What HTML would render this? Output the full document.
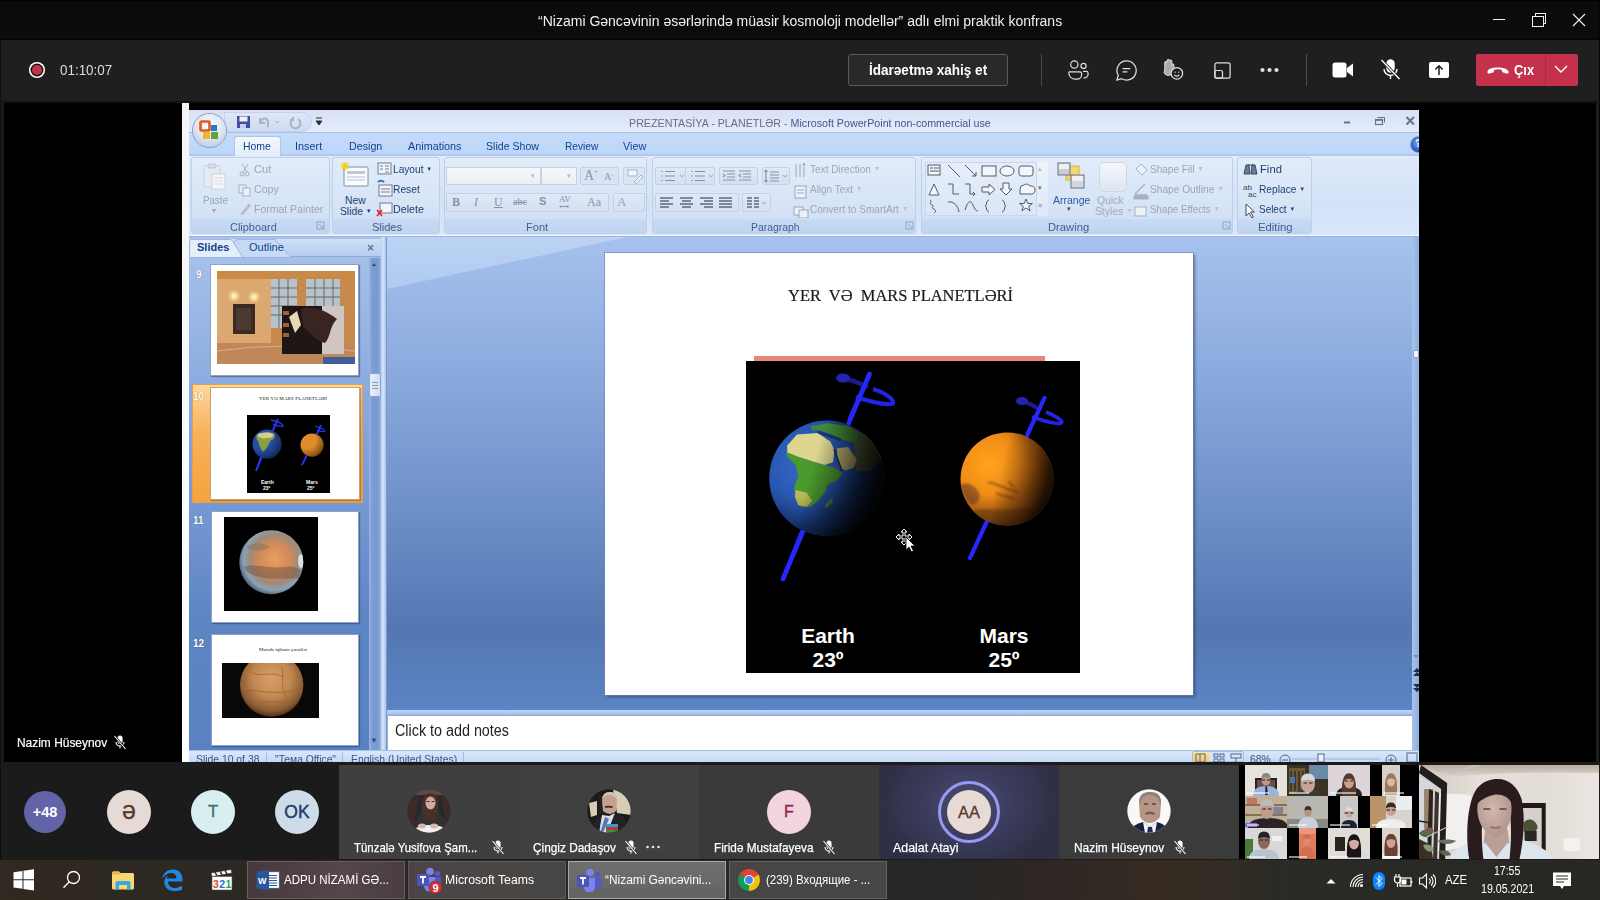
<!DOCTYPE html>
<html><head><meta charset="utf-8">
<style>
*{margin:0;padding:0;box-sizing:border-box}
html,body{width:1600px;height:900px;overflow:hidden;background:#1b1b1b;font-family:"Liberation Sans",sans-serif}
.a{position:absolute}
.t{position:absolute;white-space:nowrap;line-height:1}
</style></head><body>
<div class="a" style="left:0;top:0;width:1600px;height:900px;overflow:hidden">

<!-- ===== Teams title bar ===== -->
<div class="a" style="left:0;top:0;width:1600px;height:40px;background:#0b0b0b"></div>
<div class="a" style="left:0;top:0;width:1600px;height:1px;background:#030303"></div>
<div class="a" style="left:0;top:39px;width:1600px;height:1px;background:#040404"></div>
<div class="t" id="title" style="left:538.4px;top:14px;font-size:14px;color:#f0f0f0;transform:scaleX(1.001);transform-origin:0 0">“Nizami Gəncəvinin əsərlərində müasir kosmoloji modellər” adlı elmi praktik konfrans</div>

<!-- ===== Teams control bar ===== -->
<div class="a" style="left:0;top:40px;width:1600px;height:61px;background:#1f1f1f"></div>


<!-- title bar window controls -->
<svg class="a" style="left:1480px;top:0" width="120" height="40" viewBox="0 0 120 40" fill="none" stroke="#f2f2f2" stroke-width="1" shape-rendering="crispEdges">
 <path d="M13 19.5 H25"/>
 <rect x="52.5" y="16.5" width="10.5" height="10"/>
 <path d="M55.5 16 V13.5 H65.5 V23.5 H63"/>
 <path d="M93 14 L105 26 M105 14 L93 26" shape-rendering="auto" stroke-width="1.1"/>
</svg>
<!-- record + timer -->
<svg class="a" style="left:27px;top:61px" width="20" height="20" viewBox="0 0 20 20">
 <circle cx="10" cy="9" r="8.1" fill="#fff"/><circle cx="10" cy="9" r="6.5" fill="#121212"/><circle cx="10" cy="9" r="5.1" fill="#c4314b"/>
</svg>
<div class="t" style="left:60.4px;top:63px;font-size:14px;color:#dcdcdc;transform:scaleX(0.958);transform-origin:0 0">01:10:07</div>
<!-- request control button -->
<div class="a" style="left:848px;top:54px;width:160px;height:32px;border:1px solid #5a5a5a;border-radius:3px;background:#292929"></div>
<div class="t" style="left:869.4px;top:63px;font-size:14px;font-weight:bold;color:#fff;transform:scaleX(0.967);transform-origin:0 0">İdarəetmə xahiş et</div>
<div class="a" style="left:1041px;top:54px;width:1px;height:32px;background:#4a4a4a"></div>
<div class="a" style="left:1306px;top:54px;width:1px;height:32px;background:#4a4a4a"></div>
<!-- people icon -->
<svg class="a" style="left:1065px;top:59px" width="26" height="22" viewBox="0 0 28 24" fill="none" stroke="#e0e0e0" stroke-width="1.3">
 <circle cx="10" cy="6" r="4"/><circle cx="20" cy="7.5" r="2.8"/>
 <path d="M4 14 h12 a2 2 0 0 1 2 2 v1 a5 5 0 0 1 -5 5 h-2 a7 7 0 0 1 -7 -6 v-1 a1 1 0 0 1 1 -1z"/>
 <path d="M19.5 13.5 h3.5 a2 2 0 0 1 2 2 v1 a4 4 0 0 1 -5 4"/>
</svg>
<!-- chat icon -->
<svg class="a" style="left:1115px;top:59px" width="23" height="23" viewBox="0 0 24 24" fill="none" stroke="#e0e0e0" stroke-width="1.3">
 <path d="M12 2 a10 10 0 1 1 -5 18.6 L2 22 L3.4 17 A10 10 0 0 1 12 2z"/>
 <path d="M8 10 H16 M8 13.5 H13"/>
</svg>
<!-- react icon -->
<svg class="a" style="left:1160px;top:57px" width="25" height="25" viewBox="0 0 26 26" fill="none" stroke="#e0e0e0" stroke-width="1.3">
 <path d="M5 13 V6 a1.2 1.2 0 0 1 2.4 0 V4 a1.2 1.2 0 0 1 2.4 0 V4.5 a1.2 1.2 0 0 1 2.4 0 V8 a1.2 1.2 0 0 1 2.2 0.5 V13 a6 6 0 0 1 -6 6 a5 5 0 0 1 -4 -3z" fill="#aaa" stroke="#d0d0d0"/>
 <circle cx="17.5" cy="17" r="6" fill="#1f1f1f"/>
 <circle cx="15.7" cy="15.8" r="0.7" fill="#e0e0e0" stroke="none"/><circle cx="19.3" cy="15.8" r="0.7" fill="#e0e0e0" stroke="none"/>
 <path d="M15 18.5 a2.8 2.8 0 0 0 5 0"/>
</svg>
<!-- share tray icon -->
<svg class="a" style="left:1213px;top:61px" width="19" height="19" viewBox="0 0 20 20" fill="none" stroke="#e0e0e0" stroke-width="1.3">
 <rect x="2" y="2" width="16" height="16" rx="2"/>
 <rect x="2" y="10" width="8" height="8" rx="1.5"/>
</svg>
<!-- more dots -->
<svg class="a" style="left:1258px;top:62px" width="24" height="16" viewBox="0 0 24 16" fill="#e0e0e0">
 <circle cx="4.5" cy="8" r="2.1"/><circle cx="11.5" cy="8" r="2.1"/><circle cx="18.5" cy="8" r="2.1"/>
</svg>
<!-- camera -->
<svg class="a" style="left:1330px;top:58px" width="26" height="24" viewBox="0 0 26 24" fill="#fff">
 <rect x="2.5" y="4.5" width="14" height="15" rx="2.5"/>
 <path d="M17 10 L23 5.5 V18.5 L17 14z"/>
</svg>
<!-- mic off -->
<svg class="a" style="left:1379px;top:58px" width="24" height="24" viewBox="0 0 24 24" fill="none" stroke="#fff" stroke-width="1.4">
 <rect x="8" y="2" width="7" height="12" rx="3.5" fill="#fff"/>
 <path d="M5 11 a6.5 6.5 0 0 0 13 0 M11.5 17.5 V21"/>
 <path d="M2.5 2 L20.5 21" stroke="#1f1f1f" stroke-width="3"/>
 <path d="M2.5 2 L20.5 21"/>
</svg>
<!-- share -->
<svg class="a" style="left:1427px;top:58px" width="24" height="24" viewBox="0 0 24 24">
 <rect x="2" y="4" width="20" height="16" rx="2" fill="#fff"/>
 <path d="M12 17 V8 M8.3 11.5 L12 7.8 L15.7 11.5" fill="none" stroke="#1f1f1f" stroke-width="1.5"/>
</svg>
<!-- leave button -->
<div class="a" style="left:1476px;top:54px;width:102px;height:32px;background:#c4314b;border-radius:2px"></div>
<div class="a" style="left:1545px;top:54px;width:1px;height:32px;background:#a9283f"></div>
<svg class="a" style="left:1486px;top:62px" width="24" height="16" viewBox="0 0 24 16">
 <path d="M1.5 9.5 C2 4 21 4 22.5 9.5 C22.8 11 22 12 20.8 11.6 L17 10.5 C16 10.2 16 9 16 8 C13 7 11 7 8 8 C8 9 8 10.2 7 10.5 L3.2 11.6 C2 12 1.2 11 1.5 9.5z" fill="#fff"/>
</svg>
<div class="t" style="left:1514.4px;top:63px;font-size:14px;font-weight:bold;color:#fff;transform:scaleX(0.927);transform-origin:0 0">Çıx</div>
<svg class="a" style="left:1553px;top:63px" width="16" height="12" viewBox="0 0 16 12">
 <path d="M2 3 L8 9 L14 3" fill="none" stroke="#fff" stroke-width="1.4"/>
</svg>
<div class="a" style="left:1596px;top:101px;width:3px;height:661px;background:#1e1e1e"></div>
<div class="a" style="left:1599px;top:0;width:1px;height:860px;background:#050505"></div>
<div class="a" style="left:0;top:40px;width:1px;height:820px;background:#101010"></div>

<!-- ===== Share area ===== -->
<div class="a" style="left:0;top:101px;width:1600px;height:2px;background:#141414"></div>
<div class="a" style="left:4px;top:103px;width:1592px;height:659px;background:#000"></div>


<!-- PowerPoint window -->
<div class="a" style="left:182px;top:103px;width:7px;height:659px;background:linear-gradient(#f4f4f8,#fff)"></div>
<!-- ppt title bar -->
<div class="a" style="left:189px;top:110px;width:1230px;height:23px;background:linear-gradient(#d8e1f5,#e4ecfb)"></div>
<div class="a" style="left:189px;top:132px;width:1230px;height:1px;background:#a9c0e4"></div>
<!-- QAT pill -->
<div class="a" style="left:224px;top:112px;width:88px;height:20px;border-radius:0 10px 10px 0;background:linear-gradient(#dfe7f7,#cfdbf2);border:1px solid #c3d1ea"></div>
<svg class="a" style="left:236px;top:115px" width="16" height="15" viewBox="0 0 16 15">
 <rect x="1" y="1" width="13" height="12" fill="#3f4fa8"/><rect x="3.5" y="1.5" width="8" height="5" fill="#f0f0f8"/><rect x="4" y="9" width="6" height="4" fill="#c8cde6"/>
</svg>
<svg class="a" style="left:256px;top:114px" width="60" height="16" viewBox="0 0 60 16" fill="none" stroke="#a5b3cc" stroke-width="2">
 <path d="M4 4 V9 H9 M4 9 C6 3 12 3 12 9 V13"/>
 <path d="M19 7 l2 2 l2 -2" stroke-width="1" />
 <path d="M37 5 a5 5 0 1 0 5 0 M37 3 V6 H34"/>
</svg>
<svg class="a" style="left:315px;top:115px" width="8" height="12" viewBox="0 0 8 12"><path d="M1 3 H7 M1 6 H7 L4 10z" stroke="#333" fill="#333" stroke-width="1"/></svg>
<div class="t" style="left:628.9px;top:118px;font-size:11px;color:#6a6e7e;transform:scaleX(0.972);transform-origin:0 0">PREZENTASİYA - PLANETLƏR - <span style="color:#41598a">Microsoft PowerPoint non-commercial use</span></div>
<svg class="a" style="left:1338px;top:112px" width="81" height="18" viewBox="0 0 81 18" fill="none" stroke="#6a7488">
 <path d="M6 10.5 H12" stroke-width="2"/>
 <rect x="37.5" y="7.5" width="7" height="5" stroke-width="1.2"/><path d="M39.5 5.5 H46.5 V10.5" stroke-width="1"/><path d="M37.5 8 H44.5" stroke-width="1.6"/>
 <path d="M68.5 5 L76 12.5 M76 5 L68.5 12.5" stroke-width="2"/>
</svg>
<!-- tab row -->
<div class="a" style="left:189px;top:133px;width:1230px;height:22px;background:linear-gradient(#c5dcf8,#bad6fb)"></div>
<div class="a" style="left:189px;top:154px;width:1230px;height:2px;background:#b4c8ea"></div>
<div class="a" style="left:234px;top:136px;width:47px;height:20px;border-radius:3px 3px 0 0;background:linear-gradient(#f3f7fd,#e3edfa);border:1px solid #b1c6e4;border-bottom:none"></div>
<div class="t" style="left:243.4px;top:142px;font-size:10.3px;color:#15428b;transform:scaleX(1.016);transform-origin:0 0">Home</div>
<div class="t" style="left:295.4px;top:142px;font-size:10.3px;color:#15428b;transform:scaleX(1.056);transform-origin:0 0">Insert</div>
<div class="t" style="left:349.1px;top:142px;font-size:10.3px;color:#15428b;transform:scaleX(1.039);transform-origin:0 0">Design</div>
<div class="t" style="left:407.9px;top:142px;font-size:10.3px;color:#15428b;transform:scaleX(1.050);transform-origin:0 0">Animations</div>
<div class="t" style="left:486.0px;top:142px;font-size:10.3px;color:#15428b;transform:scaleX(1.027);transform-origin:0 0">Slide Show</div>
<div class="t" style="left:565.4px;top:142px;font-size:10.3px;color:#15428b;transform:scaleX(0.983);transform-origin:0 0">Review</div>
<div class="t" style="left:623.4px;top:142px;font-size:10.3px;color:#15428b;transform:scaleX(1.048);transform-origin:0 0">View</div>
<div class="a" style="left:1410px;top:136px;width:9px;height:17px;overflow:hidden"><div class="a" style="left:0;top:0;width:17px;height:17px;border-radius:50%;background:radial-gradient(circle at 45% 40%,#7aa8f8,#1f4fc0 70%);border:1px solid #8a9cc0"></div><div class="t" style="left:5px;top:2px;font-size:11px;font-weight:bold;color:#fff">?</div></div>
<!-- ribbon body -->
<div class="a" style="left:189px;top:156px;width:1230px;height:81px;background:linear-gradient(#dfeafa,#d3e2f7 60%,#d9e7f9)"></div>
<div class="a" style="left:189px;top:235px;width:1230px;height:1px;background:#eef5fd"></div>
<div class="a" style="left:189px;top:236px;width:1230px;height:1px;background:#9db5dc"></div>
<div class="a" style="left:191px;top:157px;width:139px;height:77px;border:1px solid #bcd0ea;border-radius:3px;background:linear-gradient(#e2ecfa,#d5e3f6 70%,#c9dbf3)"></div>
<div class="a" style="left:192px;top:219px;width:137px;height:14px;background:linear-gradient(#c7daf3,#c0d5f1)"></div>
<div class="t" style="left:229.8px;top:222px;font-size:11px;color:#3e5f90;transform:scaleX(0.994);transform-origin:0 0">Clipboard</div>
<div class="a" style="left:332px;top:157px;width:108px;height:77px;border:1px solid #bcd0ea;border-radius:3px;background:linear-gradient(#e2ecfa,#d5e3f6 70%,#c9dbf3)"></div>
<div class="a" style="left:333px;top:219px;width:106px;height:14px;background:linear-gradient(#c7daf3,#c0d5f1)"></div>
<div class="t" style="left:372px;top:222px;font-size:11px;color:#3e5f90">Slides</div>
<div class="a" style="left:444px;top:157px;width:203px;height:77px;border:1px solid #bcd0ea;border-radius:3px;background:linear-gradient(#e2ecfa,#d5e3f6 70%,#c9dbf3)"></div>
<div class="a" style="left:445px;top:219px;width:201px;height:14px;background:linear-gradient(#c7daf3,#c0d5f1)"></div>
<div class="t" style="left:526.4px;top:222px;font-size:11px;color:#3e5f90;transform:scaleX(1.008);transform-origin:0 0">Font</div>
<div class="a" style="left:652px;top:157px;width:264px;height:77px;border:1px solid #bcd0ea;border-radius:3px;background:linear-gradient(#e2ecfa,#d5e3f6 70%,#c9dbf3)"></div>
<div class="a" style="left:653px;top:219px;width:262px;height:14px;background:linear-gradient(#c7daf3,#c0d5f1)"></div>
<div class="t" style="left:751.1px;top:222px;font-size:11px;color:#3e5f90;transform:scaleX(0.944);transform-origin:0 0">Paragraph</div>
<div class="a" style="left:921px;top:157px;width:312px;height:77px;border:1px solid #bcd0ea;border-radius:3px;background:linear-gradient(#e2ecfa,#d5e3f6 70%,#c9dbf3)"></div>
<div class="a" style="left:922px;top:219px;width:310px;height:14px;background:linear-gradient(#c7daf3,#c0d5f1)"></div>
<div class="t" style="left:1048.4px;top:222px;font-size:11px;color:#3e5f90;transform:scaleX(1.021);transform-origin:0 0">Drawing</div>
<div class="a" style="left:1237px;top:157px;width:75px;height:77px;border:1px solid #bcd0ea;border-radius:3px;background:linear-gradient(#e2ecfa,#d5e3f6 70%,#c9dbf3)"></div>
<div class="a" style="left:1238px;top:219px;width:73px;height:14px;background:linear-gradient(#c7daf3,#c0d5f1)"></div>
<div class="t" style="left:1258.1px;top:222px;font-size:11px;color:#3e5f90;transform:scaleX(1.026);transform-origin:0 0">Editing</div>

<!-- office button -->
<div class="a" style="left:193px;top:114px;width:33px;height:33px;border-radius:50%;background:radial-gradient(circle at 50% 35%,#fdfdff 0,#e3e8f3 45%,#c8d1e3 75%,#9aa9c4 100%);box-shadow:0 0 0 1px #8ea0c0"></div>
<svg class="a" style="left:199px;top:120px" width="22" height="22" viewBox="0 0 22 22">
 <rect x="1.5" y="1.5" width="9" height="9" rx="1" fill="none" stroke="#e05a1a" stroke-width="2.6"/>
 <rect x="12" y="5" width="6" height="6" fill="#2a77c9"/>
 <rect x="4" y="12" width="7" height="7" fill="#f0b630"/>
 <rect x="12" y="12" width="7" height="7" fill="#63a533"/>
</svg>

<!-- ===== ribbon contents ===== -->
<!-- Clipboard -->
<svg class="a" style="left:201px;top:162px" width="28" height="30" viewBox="0 0 28 30">
 <rect x="3" y="4" width="16" height="21" rx="1" fill="#e6ebf3" stroke="#c9d2e0"/>
 <rect x="7" y="2" width="8" height="4" rx="1" fill="#d6dce6" stroke="#c2cad8"/>
 <rect x="11" y="12" width="13" height="15" fill="#f4f6fa" stroke="#c9d2e0"/>
 <path d="M13 16 H22 M13 19 H22 M13 22 H22" stroke="#d8dde6"/>
</svg>
<div class="t" style="left:202.8px;top:196px;font-size:10.3px;color:#9aa6bb;transform:scaleX(0.941);transform-origin:0 0">Paste</div>
<div class="t" style="left:212px;top:207px;font-size:8px;color:#9aa6bb">▾</div>
<svg class="a" style="left:238px;top:162px" width="14" height="54" viewBox="0 0 14 54" fill="none" stroke="#a8b0c0">
 <path d="M4 2 L9 10 M10 2 L5 10"/><circle cx="4" cy="12" r="2"/><circle cx="9" cy="12" r="2"/>
 <rect x="1" y="23" width="7" height="8" fill="#e8ecf2"/><rect x="5" y="26" width="7" height="8" fill="#eef1f6"/>
 <path d="M3 52 L11 42 L12 44 L5 52z" fill="#c4cad6"/>
</svg>
<div class="t" style="left:253.9px;top:165px;font-size:10.3px;color:#9aa6bb;transform:scaleX(1.085);transform-origin:0 0">Cut</div>
<div class="t" style="left:253.9px;top:185px;font-size:10.3px;color:#9aa6bb;transform:scaleX(1.027);transform-origin:0 0">Copy</div>
<div class="t" style="left:253.9px;top:205px;font-size:10.3px;color:#9aa6bb;transform:scaleX(1.017);transform-origin:0 0">Format Painter</div>
<svg class="a" style="left:316px;top:221px" width="10" height="10" viewBox="0 0 10 10"><rect x="1" y="1" width="7" height="7" fill="none" stroke="#8fa6c8"/><path d="M3 3 L7 7 M5 7 H7 V5" stroke="#8fa6c8" fill="none"/></svg>
<!-- Slides group -->
<svg class="a" style="left:340px;top:161px" width="30" height="30" viewBox="0 0 30 30">
 <rect x="4" y="6" width="24" height="19" rx="1" fill="#fafbfd" stroke="#7f8ca4"/>
 <rect x="7" y="10" width="18" height="3" fill="#c4c9d3"/><path d="M7 16 H25 M7 19 H25" stroke="#b9c2d2"/>
 <path d="M5 1 V10 M1 5 H9 M2 2 L8 8 M8 2 L2 8" stroke="#f3d21a" stroke-width="1.6"/>
</svg>
<div class="t" style="left:345px;top:196px;font-size:10.3px;color:#1e3f72">New</div>
<div class="t" style="left:340px;top:207px;font-size:10.3px;color:#1e3f72">Slide <span style="font-size:6px;vertical-align:2px">▼</span></div>
<svg class="a" style="left:376px;top:161px" width="18" height="58" viewBox="0 0 18 58">
 <rect x="2" y="2" width="13" height="11" fill="#f3f5fa" stroke="#6e7b94"/><path d="M4 5 H7 M9 5 H13 M9 8 H13 M9 11 H13 M4 8 H7" stroke="#6e7b94"/>
 <rect x="3" y="24" width="13" height="11" fill="#f3f5fa" stroke="#6e7b94"/><path d="M5 28 H14 M5 31 H14" stroke="#6e7b94"/><path d="M2 21 a4 4 0 0 1 6 0" stroke="#3b6fc0" fill="none" stroke-width="2"/>
 <rect x="4" y="42" width="12" height="10" fill="#f3f5fa" stroke="#6e7b94"/><path d="M1 49 L6 55 M6 49 L1 55" stroke="#e02020" stroke-width="1.6"/>
</svg>
<div class="t" style="left:393.4px;top:165px;font-size:10.3px;color:#1e3f72;transform:scaleX(0.985);transform-origin:0 0">Layout <span style="font-size:6px;vertical-align:2px">▼</span></div>
<div class="t" style="left:393.4px;top:185px;font-size:10.3px;color:#1e3f72;transform:scaleX(0.996);transform-origin:0 0">Reset</div>
<div class="t" style="left:393.4px;top:205px;font-size:10.3px;color:#1e3f72;transform:scaleX(1.041);transform-origin:0 0">Delete</div>
<!-- Font group -->
<div class="a" style="left:446px;top:167px;width:95px;height:18px;background:linear-gradient(#f5f7fa,#eceff4);border:1px solid #c6d1e2"></div>
<div class="a" style="left:541px;top:167px;width:36px;height:18px;background:linear-gradient(#f5f7fa,#eceff4);border:1px solid #c6d1e2"></div>
<div class="t" style="left:531px;top:172px;font-size:7px;color:#b0b8c6">▾</div>
<div class="t" style="left:567px;top:172px;font-size:7px;color:#b0b8c6">▾</div>
<div class="a" style="left:580px;top:167px;width:39px;height:18px;border:1px solid #c6d1e2;border-radius:2px;background:#d9e5f5"></div>
<div class="a" style="left:623px;top:167px;width:22px;height:18px;border:1px solid #c6d1e2;border-radius:2px;background:#d9e5f5"></div>
<div class="t" style="left:584px;top:169px;font-family:'Liberation Serif',serif;font-size:14px;color:#8a96ab">A<span style="font-size:7px;vertical-align:top">+</span></div>
<div class="t" style="left:604px;top:172px;font-family:'Liberation Serif',serif;font-size:10px;color:#8a96ab">A<span style="font-size:6px;vertical-align:top">-</span></div>
<svg class="a" style="left:626px;top:169px" width="18" height="15" viewBox="0 0 18 15"><rect x="2" y="1" width="9" height="6" fill="#f2f4f8" stroke="#a9b3c4"/><path d="M8 13 L15 6 L17 8 L10 15z" fill="#eef2f8" stroke="#a9b3c4"/></svg>
<div class="a" style="left:446px;top:193px;width:163px;height:19px;border:1px solid #c6d1e2;border-radius:2px;background:linear-gradient(#dfe9f7,#d3e1f4)"></div>
<div class="a" style="left:613px;top:193px;width:32px;height:19px;border:1px solid #c6d1e2;border-radius:2px;background:linear-gradient(#dfe9f7,#d3e1f4)"></div>
<div class="t" style="left:452px;top:196px;font-family:'Liberation Serif',serif;font-weight:bold;font-size:12px;color:#8592a8">B</div>
<div class="t" style="left:474px;top:196px;font-family:'Liberation Serif',serif;font-style:italic;font-size:12px;color:#8592a8">I</div>
<div class="t" style="left:494px;top:196px;font-family:'Liberation Serif',serif;text-decoration:underline;font-size:12px;color:#8592a8">U</div>
<div class="t" style="left:513px;top:197px;font-family:'Liberation Serif',serif;font-size:10px;color:#8592a8;text-decoration:line-through">abc</div>
<div class="t" style="left:539px;top:196px;font-family:'Liberation Sans',sans-serif;font-weight:bold;font-size:11px;color:#8592a8">S</div>
<div class="t" style="left:559px;top:195px;font-family:'Liberation Serif',serif;font-size:9px;color:#8592a8">AV</div>
<div class="t" style="left:559px;top:203px;font-size:7px;color:#8592a8">⟷</div>
<div class="t" style="left:587px;top:196px;font-family:'Liberation Serif',serif;font-size:12px;color:#8592a8">Aa</div>
<div class="t" style="left:617px;top:195px;font-family:'Liberation Serif',serif;font-size:13px;color:#9aa5b8">A</div>
<div class="a" style="left:655px;top:167px;width:60px;height:18px;border:1px solid #c6d1e2;border-radius:2px;background:linear-gradient(#dfe9f7,#d3e1f4)"></div>
<div class="a" style="left:719px;top:167px;width:39px;height:18px;border:1px solid #c6d1e2;border-radius:2px;background:linear-gradient(#dfe9f7,#d3e1f4)"></div>
<div class="a" style="left:762px;top:167px;width:28px;height:18px;border:1px solid #c6d1e2;border-radius:2px;background:linear-gradient(#dfe9f7,#d3e1f4)"></div>
<div class="a" style="left:655px;top:193px;width:84px;height:19px;border:1px solid #c6d1e2;border-radius:2px;background:linear-gradient(#dfe9f7,#d3e1f4)"></div>
<div class="a" style="left:742px;top:193px;width:29px;height:19px;border:1px solid #c6d1e2;border-radius:2px;background:linear-gradient(#dfe9f7,#d3e1f4)"></div>
<div class="a" style="left:685px;top:168px;width:1px;height:16px;background:#c6d1e2"></div>
<svg class="a" style="left:655px;top:167px" width="140" height="46" viewBox="0 0 140 46" fill="none" stroke="#8591a6" stroke-width="1.1">
 <path d="M6 4.5 h1.5 M6 9 h1.5 M6 13.5 h1.5 M10 4.5 h10 M10 9 h10 M10 13.5 h10"/>
 <path d="M25 8 l2 2 l2 -2" stroke="#b0b8c8"/>
 <path d="M36 4.5 h1.5 M36 9 h1.5 M36 13.5 h1.5 M40 4.5 h10 M40 9 h10 M40 13.5 h10"/>
 <path d="M54 8 l2 2 l2 -2" stroke="#b0b8c8"/>
 <path d="M68 4 h12 M72 7 h8 M72 10 h8 M68 13 h12 M68 7 l2 1.5 l-2 1.5"/>
 <path d="M84 4 h12 M88 7 h8 M88 10 h8 M84 13 h12 M86 7 l-2 1.5 l2 1.5"/>
 <path d="M115 5 h9 M115 8 h9 M115 11 h9 M115 14 h9 M111 3 v12 M109.5 5 l1.5 -2 l1.5 2 M109.5 13 l1.5 2 l1.5 -2"/>
 <path d="M128 8 l2 2 l2 -2" stroke="#b0b8c8"/>
 <g stroke="#5c6a82" stroke-width="1.3">
 <path d="M5 31 h13 M5 34 h9 M5 37 h13 M5 40 h9"/>
 <path d="M25 31 h13 M27 34 h9 M25 37 h13 M27 40 h9"/>
 <path d="M45 31 h13 M49 34 h9 M45 37 h13 M49 40 h9"/>
 <path d="M64 31 h13 M64 34 h13 M64 37 h13 M64 40 h13"/>
 <path d="M92 31 h5 M92 34 h5 M92 37 h5 M92 40 h5 M99 31 h5 M99 34 h5 M99 37 h5 M99 40 h5"/>
 </g>
 <path d="M107 35 l2 2 l2 -2" stroke="#b0b8c8"/>
</svg>
<svg class="a" style="left:793px;top:162px" width="16" height="56" viewBox="0 0 16 56" fill="none" stroke="#9aa5b8">
 <path d="M3 2 v13 M7 2 v13 M11 5 v10 M10 4 l1-3 l1 3"/>
 <rect x="2" y="24" width="11" height="12" fill="#eef2f8"/><path d="M4 28 h7 M4 31 h7"/>
 <rect x="1" y="45" width="9" height="8" fill="#eef2f8"/><rect x="6" y="48" width="9" height="8" fill="#eef2f8"/>
</svg>
<div class="t" style="left:810.0px;top:165px;font-size:10.3px;color:#9aa6bb;transform:scaleX(0.977);transform-origin:0 0">Text Direction <span style="font-size:7px;vertical-align:2px;color:#b8c2d2">▼</span></div>
<div class="t" style="left:810.0px;top:185px;font-size:10.3px;color:#9aa6bb;transform:scaleX(0.967);transform-origin:0 0">Align Text <span style="font-size:7px;vertical-align:2px;color:#b8c2d2">▼</span></div>
<div class="t" style="left:810.0px;top:205px;font-size:10.3px;color:#9aa6bb;transform:scaleX(0.977);transform-origin:0 0">Convert to SmartArt <span style="font-size:7px;vertical-align:2px;color:#b8c2d2">▼</span></div>
<svg class="a" style="left:905px;top:221px" width="10" height="10" viewBox="0 0 10 10"><rect x="1" y="1" width="7" height="7" fill="none" stroke="#8fa6c8"/><path d="M3 3 L7 7" stroke="#8fa6c8"/></svg>
<div class="a" style="left:925px;top:162px;width:123px;height:54px;border:1px solid #c9d7ec;background:linear-gradient(#e6eef9,#dae6f6)"></div>
<svg class="a" style="left:925px;top:162px" width="124" height="54" viewBox="0 0 124 54" fill="#f3f6fb" stroke="#4e5a6e" stroke-width="1">
 <rect x="3" y="3" width="12" height="10" fill="#f5f5f5"/><path d="M5 6 h3 M9 6 h5 M5 9 h9" />
 <path d="M23 3 L35 15" fill="none"/>
 <path d="M40 3 L51 14 M51 10 v4 h-4" fill="none"/>
 <rect x="57" y="4" width="14" height="10"/>
 <ellipse cx="82" cy="9" rx="7" ry="5"/>
 <rect x="94" y="4" width="14" height="10" rx="2.5"/>
 <path d="M4 33 L9 22 L14 33z"/>
 <path d="M23 22 h5 v10 h6" fill="none"/>
 <path d="M40 22 h5 v10 h5 M48 30 l2 2 l-2 2" fill="none"/>
 <path d="M57 25 h7 v-3 l6 5.5 l-6 5.5 v-3 h-7z"/>
 <path d="M78 21 h6 v6 h3 l-6 6 l-6 -6 h3z"/>
 <path d="M95 32 v-5 a4 4 0 0 1 4 -4 a4 4 0 0 1 6 1 a4 4 0 0 1 2 8z"/>
 <path d="M5 38 c3 1 -2 4 2 5 c3 1 -2 3 2 4 c2 1 2 3 0 4" fill="none"/>
 <path d="M23 40 c6 -1 10 4 11 10" fill="none"/>
 <path d="M40 48 c3 -10 6 -10 8 -5 c2 5 3 6 5 6" fill="none"/>
 <path d="M64 38 c-3 0 -2 6 -4 6 c2 0 1 6 4 6" fill="none"/>
 <path d="M77 38 c3 0 2 6 4 6 c-2 0 -1 6 -4 6" fill="none"/>
 <path d="M101 37 l1.8 4.5 h4.6 l-3.7 2.8 l1.4 4.5 l-4.1 -2.8 l-4.1 2.8 l1.4 -4.5 l-3.7 -2.8 h4.6z"/>
</svg>
<div class="a" style="left:1036px;top:162px;width:12px;height:54px;border-left:1px solid #c9d7ec;background:linear-gradient(#eef3fb,#dfe8f6)"></div>
<div class="t" style="left:1038px;top:165px;font-size:7px;color:#aab6c8">▴</div>
<div class="t" style="left:1038px;top:184px;font-size:7px;color:#66738a">▾</div>
<div class="t" style="left:1038px;top:202px;font-size:7px;color:#66738a">≡</div>
<svg class="a" style="left:1056px;top:161px" width="32" height="30" viewBox="0 0 32 30">
 <rect x="10" y="5" width="13" height="14" fill="#f6d76a" stroke="#d3b040"/>
 <rect x="2" y="2" width="12" height="12" fill="#c9cdd6" stroke="#6c7486"/>
 <rect x="15" y="14" width="13" height="13" fill="#d2d6de" stroke="#6c7486"/>
 <rect x="3" y="3" width="10" height="5" fill="#eef0f4"/><rect x="16" y="15" width="11" height="5" fill="#eef0f4"/>
</svg>
<div class="t" style="left:1053.2px;top:196px;font-size:10.3px;color:#2c5aa6;transform:scaleX(1.021);transform-origin:0 0">Arrange</div>
<div class="t" style="left:1067px;top:205px;font-size:7px;color:#445">▾</div>
<div class="a" style="left:1099px;top:162px;width:28px;height:30px;border-radius:5px;border:1px solid #cdd6e4;background:linear-gradient(#f3f6fb,#dfe6f1)"></div>
<div class="t" style="left:1097px;top:196px;font-size:10.3px;color:#9fabbf">Quick</div>
<div class="t" style="left:1095px;top:207px;font-size:10.3px;color:#9fabbf">Styles <span style="font-size:7px;vertical-align:2px;color:#b8c2d2">▼</span></div>
<svg class="a" style="left:1133px;top:161px" width="16" height="58" viewBox="0 0 16 58" fill="none" stroke="#a6b0c2">
 <path d="M3 8 l5 -5 l6 6 l-5 5z" fill="#eef2f8"/>
 <path d="M2 33 l10 -10 M2 34 h12" stroke-width="1.3"/><rect x="1" y="35" width="14" height="3" fill="#a6b0c2"/>
 <rect x="2" y="46" width="11" height="9" fill="#eef2f8"/>
</svg>
<div class="t" style="left:1150.4px;top:165px;font-size:10.3px;color:#9aa6bb;transform:scaleX(0.973);transform-origin:0 0">Shape Fill <span style="font-size:7px;vertical-align:2px;color:#b8c2d2">▼</span></div>
<div class="t" style="left:1150.4px;top:185px;font-size:10.3px;color:#9aa6bb;transform:scaleX(0.987);transform-origin:0 0">Shape Outline <span style="font-size:7px;vertical-align:2px;color:#b8c2d2">▼</span></div>
<div class="t" style="left:1150.4px;top:205px;font-size:10.3px;color:#9aa6bb;transform:scaleX(0.950);transform-origin:0 0">Shape Effects <span style="font-size:7px;vertical-align:2px;color:#b8c2d2">▼</span></div>
<svg class="a" style="left:1222px;top:221px" width="10" height="10" viewBox="0 0 10 10"><rect x="1" y="1" width="7" height="7" fill="none" stroke="#8fa6c8"/><path d="M3 3 L7 7" stroke="#8fa6c8"/></svg>
<!-- Editing -->
<svg class="a" style="left:1242px;top:161px" width="18" height="58" viewBox="0 0 18 58" fill="none" stroke="#3d4a62">
 <path d="M2 13 l2 -9 h3 l1 9z M9 13 l1 -9 h3 l2 9z" fill="#6a7a98"/><path d="M6 4 h6" />
 <text x="1" y="29" font-size="8" fill="#3d4a62" stroke="none" font-family="Liberation Sans">ab</text><text x="6" y="36" font-size="8" fill="#3d4a62" stroke="none" font-family="Liberation Sans">ac</text>
 <path d="M4 43 v12 l3 -3 l3 5 l1.5 -1 l-3 -5 h4z" fill="#fff"/>
</svg>
<div class="t" style="left:1259.7px;top:165px;font-size:10.3px;color:#1e3f72;transform:scaleX(1.093);transform-origin:0 0">Find</div>
<div class="t" style="left:1259.4px;top:185px;font-size:10.3px;color:#1e3f72;transform:scaleX(0.990);transform-origin:0 0">Replace <span style="font-size:6px;vertical-align:2px">▼</span></div>
<div class="t" style="left:1259.4px;top:205px;font-size:10.3px;color:#1e3f72;transform:scaleX(0.965);transform-origin:0 0">Select <span style="font-size:6px;vertical-align:2px">▼</span></div>

<!-- lower area bg -->
<div class="a" style="left:189px;top:237px;width:1230px;height:525px;background:#6f94cf"></div>
<!-- slides pane -->
<div class="a" style="left:189px;top:237px;width:192px;height:513px;background:linear-gradient(#a8c3ec 0,#94b3e4 20%,#7c9fd8 45%,#5d84c3 75%,#5a82c2 100%)"></div>
<div class="a" style="left:189px;top:239px;width:192px;height:18px;background:linear-gradient(#cfe0f7,#b5cdf0);border-bottom:1px solid #8eaad6"></div>
<svg class="a" style="left:189px;top:239px" width="120" height="19" viewBox="0 0 120 19">
 <path d="M0.5 18.5 V2.5 Q0.5 0.5 3 0.5 H42 L57 18.5z" fill="#e4eefb" stroke="#9fb6da"/>
 <path d="M54 18.5 L46 6 Q44 0.5 50 0.5 H86 L102 18.5z" fill="#c6daf5" stroke="#9fb6da"/>
</svg>
<div class="t" style="left:197px;top:242px;font-size:11px;font-weight:bold;color:#15428b">Slides</div>
<div class="t" style="left:249px;top:242px;font-size:11px;color:#15428b">Outline</div>
<div class="t" style="left:367px;top:242px;font-size:12px;color:#4f6a92;-webkit-text-stroke:0.3px #4f6a92">×</div>
<!-- scrollbar -->
<div class="a" style="left:369px;top:258px;width:12px;height:492px;background:linear-gradient(90deg,#9ab8e6 0,#7c9cd2 25%,#7898d0 75%,#9ab8e6 100%)"></div>
<div class="t" style="left:370px;top:261px;font-size:8px;color:#2d4f86;transform:scaleY(0.6)">▲</div>
<div class="t" style="left:370px;top:737px;font-size:8px;color:#2d4f86">▼</div>
<div class="a" style="left:369px;top:373px;width:12px;height:24px;border-radius:2px;border:1px solid #8ea6cc;background:linear-gradient(90deg,#e8effa,#d0ddf2)"></div>
<div class="a" style="left:372px;top:382px;width:6px;height:1px;background:#8899b8"></div>
<div class="a" style="left:372px;top:385px;width:6px;height:1px;background:#8899b8"></div>
<div class="a" style="left:372px;top:388px;width:6px;height:1px;background:#8899b8"></div>
<!-- splitter -->
<div class="a" style="left:381px;top:237px;width:5px;height:513px;background:linear-gradient(90deg,#bcd3f2,#d0e1f8,#a8c2ea)"></div>
<div class="a" style="left:386px;top:237px;width:1px;height:513px;background:#7d98c4"></div>
<!-- thumbnails -->
<div class="t" style="left:196px;top:270px;font-size:10px;font-weight:bold;color:#fff;text-shadow:0 0 1px #456">9</div>
<div class="a" style="left:210px;top:264px;width:149px;height:112px;background:#fff;border:1px solid #8da3c6;box-shadow:1px 1px 1px rgba(40,60,110,.5)"></div>
<svg class="a" style="left:217px;top:271px;filter:blur(0.5px)" width="138" height="93" viewBox="0 0 138 93">
 <defs><radialGradient id="lamp"><stop offset="0" stop-color="#fff8d8"/><stop offset="0.4" stop-color="#ffe8a8" stop-opacity="0.8"/><stop offset="1" stop-color="#f0c080" stop-opacity="0"/></radialGradient></defs>
 <rect width="138" height="93" fill="#d49a5e"/>
 <rect x="0" y="0" width="54" height="93" fill="#dba872"/>
 <rect x="0" y="0" width="138" height="8" fill="#c98a48"/>
 <rect x="54" y="8" width="84" height="85" fill="#c88a4c"/>
 <rect x="54" y="8" width="26" height="49" fill="#b8c2cc"/>
 <path d="M54 17 H80 M54 26 H80 M54 35 H80 M54 44 H80 M62 8 V57 M71 8 V57" stroke="#6a6a5a" stroke-width="1"/>
 <rect x="89" y="8" width="34" height="28" fill="#b8c2cc"/>
 <path d="M89 17 H123 M89 26 H123 M98 8 V36 M107 8 V36 M116 8 V36" stroke="#6a6a5a" stroke-width="1"/>
 <circle cx="17" cy="25" r="7" fill="url(#lamp)"/><circle cx="37" cy="26" r="7" fill="url(#lamp)"/>
 <rect x="16" y="33" width="22" height="30" fill="#3a2a22"/><rect x="19" y="37" width="15" height="22" fill="#4a3a30"/>
 <rect x="0" y="72" width="138" height="21" fill="#c08858"/>
 <path d="M0 80 Q69 70 138 80" stroke="#e0b080" stroke-width="1" fill="none"/>
 <rect x="65" y="35" width="40" height="48" fill="#1e1614"/>
 <path d="M72 46 l8 -6 l4 14 l-6 8z" fill="#e8d8b8"/>
 <path d="M66 40 h6 v4 h-6z M66 52 h6 v4 h-6z M66 62 h6 v4 h-6z" fill="#a06040"/>
 <rect x="105" y="35" width="22" height="48" fill="#cfc6c4"/>
 <path d="M84 38 C96 34 110 40 120 48 C112 56 114 66 108 72 C98 70 92 60 86 56z" fill="#3a2420"/>
 <rect x="106" y="86" width="32" height="7" fill="#3f5f9a"/>
</svg>
<div class="a" style="left:192px;top:384px;width:171px;height:119px;border:1px solid #e6a040;background:linear-gradient(#fcd9a0,#f7b25c 40%,#f6a23e)"></div>
<div class="t" style="left:193px;top:392px;font-size:10px;font-weight:bold;color:#fff;text-shadow:0 0 1px #a60">10</div>
<div class="a" style="left:210px;top:387px;width:150px;height:113px;background:#fff;border:1px solid #c9a070;box-shadow:1px 1px 1px rgba(120,80,30,.5)"></div>
<div class="t" style="left:259px;top:396px;font-family:'Liberation Serif',serif;font-size:5px;letter-spacing:0.1px;color:#111">YER VƏ MARS PLANETLƏRİ</div>
<div class="a" style="left:247px;top:415px;width:83px;height:78px;background:#000"></div>
<svg class="a" style="left:247px;top:415px" width="83" height="78" viewBox="0 0 83 78">
 <path d="M31 4 L9 56" stroke="#2a35ff" stroke-width="1.6"/>
 <path d="M24 5 C30 6 36 9 36 11 C34 12 30 11 26 9" fill="none" stroke="#2a35ff" stroke-width="1.3"/>
 <path d="M74 10 L55 50" stroke="#2a35ff" stroke-width="1.5"/>
 <path d="M68 11 C72 12 78 15 78 16 C76 17 72 16 70 15" fill="none" stroke="#2a35ff" stroke-width="1.2"/>
 <circle cx="20" cy="29" r="14.5" fill="#244fa8"/>
 <path d="M10 20 C14 17 22 17 27 19 C29 22 27 25 24 25 C22 28 20 34 16 37 C13 34 12 29 11 26 C9 24 9 22 10 20z" fill="#8aa040"/>
 <path d="M10 20 C14 17 22 17 27 19 C27 22 24 23 20 23 C16 24 12 23 10 20z" fill="#d4cc90"/>
 <circle cx="20" cy="29" r="14.5" fill="url(#shade)"/>
 <circle cx="65" cy="30" r="11.5" fill="#e08a28"/>
 <circle cx="65" cy="30" r="11.5" fill="url(#shade)"/>
 <path d="M31 4 L26 15" stroke="#2a35ff" stroke-width="1.6"/><path d="M14 42 L9 56" stroke="#2a35ff" stroke-width="1.6"/>
 <path d="M74 10 L70 19" stroke="#2a35ff" stroke-width="1.5"/><path d="M60 40 L55 50" stroke="#2a35ff" stroke-width="1.5"/>
</svg>
<div class="t" style="left:261px;top:480px;font-size:5px;font-weight:bold;color:#fff">Earth</div>
<div class="t" style="left:263px;top:486px;font-size:5px;font-weight:bold;color:#fff">23º</div>
<div class="t" style="left:306px;top:480px;font-size:5px;font-weight:bold;color:#fff">Mars</div>
<div class="t" style="left:307px;top:486px;font-size:5px;font-weight:bold;color:#fff">25º</div>

<div class="t" style="left:193px;top:516px;font-size:10px;font-weight:bold;color:#fff;text-shadow:0 0 1px #345">11</div>
<div class="a" style="left:211px;top:511px;width:148px;height:112px;background:#fff;border:1px solid #8da3c6;box-shadow:1px 1px 1px rgba(40,60,110,.5)"></div>
<div class="a" style="left:224px;top:517px;width:94px;height:94px;background:#000"></div>
<svg class="a" style="left:224px;top:517px;filter:blur(0.3px)" width="94" height="94" viewBox="0 0 94 94">
 <defs><radialGradient id="m11" cx="0.55" cy="0.45" r="0.55"><stop offset="0" stop-color="#eaa060"/><stop offset="0.45" stop-color="#d08a58"/><stop offset="0.7" stop-color="#a08a78"/><stop offset="0.88" stop-color="#8aa4b8"/><stop offset="1" stop-color="#5a7088"/></radialGradient>
 <clipPath id="c11"><circle cx="47.3" cy="45.3" r="32"/></clipPath></defs>
 <circle cx="47.3" cy="45.3" r="32" fill="url(#m11)"/>
 <g clip-path="url(#c11)">
  <path d="M20 50 C30 46 44 52 60 50 C70 48 76 52 80 56 L80 62 C66 60 50 64 36 60 C28 58 22 56 20 50z" fill="#6a5040" opacity="0.45"/>
  <path d="M22 30 C30 24 40 26 46 30 C40 34 30 36 22 30z" fill="#7a6a5a" opacity="0.4"/>
  <ellipse cx="77" cy="44" rx="3" ry="7" fill="#e8f4ff" opacity="0.8"/>
 </g>
</svg>

<div class="t" style="left:193px;top:639px;font-size:10px;font-weight:bold;color:#fff;text-shadow:0 0 1px #345">12</div>
<div class="a" style="left:211px;top:634px;width:148px;height:112px;background:#fff;border:1px solid #8da3c6;box-shadow:1px 1px 1px rgba(40,60,110,.5)"></div>
<div class="t" style="left:259px;top:647px;font-family:'Liberation Serif',serif;font-size:5px;color:#222">Marsda  iqlimin  şəraitlər</div>
<div class="a" style="left:222px;top:663px;width:97px;height:55px;background:#0a0806"></div>
<svg class="a" style="left:222px;top:663px;filter:blur(0.3px)" width="97" height="55" viewBox="0 0 97 55">
 <defs><radialGradient id="m12" cx="0.5" cy="0.4" r="0.6"><stop offset="0" stop-color="#d8a068"/><stop offset="0.5" stop-color="#c08850"/><stop offset="0.85" stop-color="#8a5a34"/><stop offset="1" stop-color="#4a3020"/></radialGradient>
 <clipPath id="c12"><circle cx="49.7" cy="22" r="31.7"/></clipPath></defs>
 <circle cx="49.7" cy="22" r="31.7" fill="url(#m12)"/>
 <g clip-path="url(#c12)" stroke="#8a5a30" stroke-width="0.8" fill="none" opacity="0.7">
  <path d="M30 10 C40 14 50 8 62 14 M24 28 C36 26 48 32 70 28 M40 40 C50 36 60 42 72 38 M60 4 C62 14 58 24 64 34"/>
 </g>
</svg>




<!-- main workspace -->
<div class="a" style="left:387px;top:237px;width:1025px;height:473px;background:linear-gradient(#a6c2ed 0,#9cb9e8 10%,#89a9dd 30%,#7597cd 50%,#6486c0 68%,#5477b1 83%,#587fbd 93%,#5c84c2 100%)"></div>
<div class="a" style="left:387px;top:237px;width:240px;height:52px;background:linear-gradient(#bad2f3,#b0caf0);clip-path:polygon(0 0,100% 0,0 100%)"></div>
<!-- slide shadow + slide -->
<div class="a" style="left:607px;top:255px;width:588px;height:442px;background:rgba(30,50,90,.55);filter:blur(1.5px)"></div>
<div class="a" style="left:605px;top:253px;width:588px;height:442px;background:#fff;box-shadow:0 0 0 1px rgba(110,130,170,.6)"></div>
<div class="t" style="left:787.5px;top:288px;font-family:'Liberation Serif',serif;font-size:16px;color:#1a1a1a;-webkit-text-stroke:0.2px #1a1a1a;transform:scaleX(1.028);transform-origin:0 0">YER&nbsp; VƏ&nbsp; MARS PLANETLƏRİ</div>
<div class="a" style="left:754px;top:356px;width:291px;height:5px;background:#e9857a"></div>
<div class="a" style="left:746px;top:361px;width:334px;height:312px;background:#000;overflow:hidden">
 <svg class="a" style="left:0;top:0" width="334" height="312" viewBox="0 0 334 312">
  <defs>
   <radialGradient id="eg" cx="0.3" cy="0.4" r="0.75">
    <stop offset="0" stop-color="#3468c8"/><stop offset="0.5" stop-color="#2654ac"/><stop offset="0.8" stop-color="#183c80"/><stop offset="1" stop-color="#0a1a3a"/>
   </radialGradient>
   <radialGradient id="mg" cx="0.3" cy="0.35" r="0.8">
    <stop offset="0" stop-color="#ffa41c"/><stop offset="0.4" stop-color="#f08c18"/><stop offset="0.75" stop-color="#b86212"/><stop offset="1" stop-color="#5a3008"/>
   </radialGradient>
   <linearGradient id="mterm" x1="0" y1="0" x2="1" y2="0.25">
    <stop offset="0.5" stop-color="#000" stop-opacity="0"/><stop offset="0.8" stop-color="#1a0800" stop-opacity="0.4"/><stop offset="1" stop-color="#000" stop-opacity="0.7"/>
   </linearGradient>
   <radialGradient id="shade" cx="0.3" cy="0.3" r="0.9">
    <stop offset="0.4" stop-color="#000" stop-opacity="0"/><stop offset="0.75" stop-color="#000" stop-opacity="0.35"/><stop offset="1" stop-color="#000" stop-opacity="0.75"/>
   </radialGradient>
   <linearGradient id="term" x1="0" y1="0" x2="1" y2="0.3">
    <stop offset="0.45" stop-color="#000" stop-opacity="0"/><stop offset="0.75" stop-color="#000" stop-opacity="0.5"/><stop offset="1" stop-color="#000" stop-opacity="0.85"/>
   </linearGradient>
   <clipPath id="ec"><circle cx="80.8" cy="117.2" r="57.6"/></clipPath>
   <filter id="soft" x="-5%" y="-5%" width="110%" height="110%"><feGaussianBlur stdDeviation="0.7"/></filter>
   <filter id="soft2" x="-10%" y="-10%" width="120%" height="120%"><feGaussianBlur stdDeviation="1.3"/></filter>
   <clipPath id="mc"><circle cx="261" cy="118" r="46.5"/></clipPath>
  </defs>
  <!-- earth axis + ring -->
  <path d="M123.5 13 L37 218" stroke="#2626ff" stroke-width="4.5" stroke-linecap="round"/>
  <path d="M97 17 C106 19 114 22 122 26" fill="none" stroke="#1c1c8c" stroke-width="4.5"/>
  <ellipse cx="97" cy="17" rx="7" ry="4.5" fill="#2424b4"/>
  <path d="M127 28 C138 31 148 38 147 42 C145 45 128 42 110 36" fill="none" stroke="#2424e8" stroke-width="4.2"/>
  <circle cx="80.8" cy="117.2" r="57.6" fill="url(#eg)"/>
  <g clip-path="url(#ec)"><g filter="url(#soft)">
   <path d="M64.8 65.1 L81.5 62.3 L102.3 65.1 L113.4 74.8 L107.9 81.8 L96.8 79 L85.7 73.4 L74.6 69.3 L66.2 69.3z" fill="#3f8a34"/>
   <path d="M102.3 65.1 L124 76 L136 98 L124 110 L110 110 L107.9 81.8 L113.4 74.8z" fill="#5a6a3c"/>
   <path d="M39.8 91.5 L52.3 95.7 L64.8 99.8 L78.7 104 L88.4 106.8 L96.8 112.3 L91.2 119.3 L81.5 123.4 L78.7 131.8 L71.8 140.1 L64.8 145.7 L55.1 145.7 L49.6 137.3 L48.2 126.2 L52.3 115.1 L49.6 104 L41.2 95.7z" fill="#4c9a2e"/>
   <path d="M41.2 84.6 L51 73.4 L71.8 72 L84.3 80.4 L88.4 88.7 L87 101.2 L78.7 104 L64.8 99.8 L52.3 95.7 L41.2 91.5z" fill="#ddd58e"/>
   <path d="M49.6 129 L60.7 131.8 L66.2 140.1 L60.7 145.7 L52.3 144.3 L48.9 136z" fill="#b8b858"/>
   <path d="M91.2 87.3 L102.3 86 L110.7 98.4 L107.9 106.8 L99.6 109.6 L94 106.8 L91.2 95.7z" fill="#bdb474"/>
   <path d="M88 88 L96 110" stroke="#1a2a5a" stroke-width="1.6"/>
   <path d="M72 71 C80 74 88 76 95 79" stroke="#1a3070" stroke-width="2.5" fill="none"/>
   <path d="M78.7 144.3 L85.7 137.3 L87 141.5 L80.1 147z" fill="#5a9a3a"/>
   </g>
   <circle cx="80.8" cy="117.2" r="57.6" fill="url(#shade)"/>
   <rect x="23" y="59" width="116" height="116" fill="url(#term)"/>
  </g>
  <path d="M123.5 13 L104 58" stroke="#2626ff" stroke-width="4.5" stroke-linecap="round"/>
  <path d="M56 171 L37 218" stroke="#2626ff" stroke-width="4.5" stroke-linecap="round"/>
  <!-- mars axis + ring -->
  <path d="M298.5 37 L224 197" stroke="#2626ff" stroke-width="4" stroke-linecap="round"/>
  <path d="M276 40 C282 42 290 46 295 49" fill="none" stroke="#1c1c8c" stroke-width="4"/>
  <ellipse cx="276" cy="40" rx="6" ry="4" fill="#2424b4"/>
  <path d="M300 51 C310 55 318 60 315 62 C311 64 298 60 286 56" fill="none" stroke="#2424e8" stroke-width="3.8"/>
  <circle cx="261" cy="118" r="46.5" fill="url(#mg)"/>
  <g clip-path="url(#mc)">
   <g filter="url(#soft2)">
   <path d="M214 124 C220 120 228 124 232 130 C236 136 232 142 226 144 C220 140 216 132 214 124z" fill="#6a3a28" opacity="0.6"/>
   <path d="M226 150 C240 146 256 150 270 148 C284 146 296 150 304 156 C290 166 260 170 236 162z" fill="#5a3012" opacity="0.45"/>
   <path d="M242 122 C248 120 252 126 258 126 C262 130 268 128 272 132 M262 120 L268 126 M250 132 C256 136 262 134 268 138" stroke="#6a2e08" stroke-width="1.6" fill="none" opacity="0.7"/>
   </g>
   <circle cx="261" cy="118" r="46.5" fill="url(#shade)" opacity="0.7"/>
   <rect x="214" y="71" width="94" height="94" fill="url(#mterm)"/>
  </g>
  <path d="M298.5 37 L282 72" stroke="#2626ff" stroke-width="4" stroke-linecap="round"/>
  <path d="M240 162 L224 197" stroke="#2626ff" stroke-width="4" stroke-linecap="round"/>
  <text x="82" y="282" font-family="Liberation Sans" font-weight="bold" font-size="21" fill="#fff" text-anchor="middle">Earth</text>
  <text x="82" y="306" font-family="Liberation Sans" font-weight="bold" font-size="21" fill="#fff" text-anchor="middle">23º</text>
  <text x="258" y="282" font-family="Liberation Sans" font-weight="bold" font-size="21" fill="#fff" text-anchor="middle">Mars</text>
  <text x="258" y="306" font-family="Liberation Sans" font-weight="bold" font-size="21" fill="#fff" text-anchor="middle">25º</text>
  <g transform="translate(150 168)">
   <path d="M8 0 L11 3 H9 V7 H13 V5 L16 8 L13 11 V9 H9 V13 H11 L8 16 L5 13 H7 V9 H3 V11 L0 8 L3 5 V7 H7 V3 H5z" fill="#000" stroke="#fff" stroke-width="1"/>
   <path d="M10 8 V21 L13 18 L15.5 23 L17.5 22 L15 17 H19z" fill="#fff" stroke="#000" stroke-width="0.8"/>
  </g>
 </svg>
</div>
<!-- right scrollbar -->
<div class="a" style="left:1412px;top:237px;width:7px;height:513px;background:linear-gradient(90deg,#a9c3ea,#8eaedf)"></div>
<div class="a" style="left:1413px;top:350px;width:6px;height:8px;background:#f2f6fc;border:1px solid #8aa2c8"></div>
<svg class="a" style="left:1412px;top:652px" width="7" height="42" viewBox="0 0 7 42" fill="#1e2a48">
 <path d="M1 3 L4 6 L7 3z" fill="#7a8ab0"/>
 <path d="M1 20 L5 16 L7 18 V20z M1 24 L5 20 L7 22 V24z"/>
 <path d="M1 32 L5 36 L7 34 V32z M1 36 L5 40 L7 38 V36z"/>
</svg>
<!-- notes separator -->
<div class="a" style="left:387px;top:710px;width:1025px;height:6px;background:linear-gradient(#b8d6fb,#a9c7f2 60%,#8ba3c6)"></div>
<!-- notes pane -->
<div class="a" style="left:387px;top:716px;width:1025px;height:34px;background:#fff;border-left:1px solid #9bb0d0"></div>
<div class="t" style="left:395.0px;top:722.8px;font-size:16px;color:#222;transform:scaleX(0.896);transform-origin:0 0">Click to add notes</div>
<!-- status bar -->
<div class="a" style="left:189px;top:750px;width:1230px;height:12px;background:linear-gradient(#d9e7fa,#c5daf7);border-top:1px solid #a7c0e5"></div>
<div class="t" style="left:195.6px;top:755px;font-size:10.3px;color:#3a5585;transform:scaleX(1.007);transform-origin:0 0">Slide 10 of 38</div>
<div class="a" style="left:266px;top:752px;width:1px;height:10px;background:#a9bedd"></div>
<div class="t" style="left:275.2px;top:755px;font-size:10.3px;color:#3a5585;transform:scaleX(0.998);transform-origin:0 0">"Тема Office"</div>
<div class="a" style="left:342px;top:752px;width:1px;height:10px;background:#a9bedd"></div>
<div class="t" style="left:351.4px;top:755px;font-size:10.3px;color:#3a5585;transform:scaleX(1.008);transform-origin:0 0">English (United States)</div>
<div class="a" style="left:463px;top:752px;width:1px;height:10px;background:#a9bedd"></div>
<div class="a" style="left:1192px;top:751px;width:52px;height:11px;border:1px solid #a6bcdc;border-radius:2px;background:#d6e3f6"></div>
<div class="a" style="left:1193px;top:752px;width:16px;height:10px;background:linear-gradient(#fde6a5,#f7c45a)"></div>
<svg class="a" style="left:1192px;top:752px" width="226" height="10" viewBox="0 0 226 10" fill="none" stroke="#4e6895" stroke-width="1">
 <rect x="4" y="2" width="9" height="8"/><path d="M8 2 V10"/>
 <rect x="22" y="2" width="4" height="3"/><rect x="28" y="2" width="4" height="3"/><rect x="22" y="7" width="4" height="3"/><rect x="28" y="7" width="4" height="3"/>
 <rect x="39" y="2" width="10" height="4"/><path d="M44 6 V10"/>
 <circle cx="93" cy="8" r="5"/><path d="M90 8 H96"/>
 <path d="M100 7 H188" stroke="#9fb3d3"/>
 <rect x="126" y="2" width="6" height="8" fill="#eef3fb"/>
 <circle cx="199" cy="8" r="5"/><path d="M196 8 H202 M199 5 V11"/>
 <rect x="215" y="1" width="10" height="9"/>
</svg>
<div class="t" style="left:1250px;top:755px;font-size:10.3px;color:#3a5585">68%</div>

<!-- ===== participant strip ===== -->
<div class="a" style="left:0;top:762px;width:1600px;height:98px;background:#1b1b1b"></div>
<div class="a" style="left:0;top:762px;width:1px;height:98px;background:#0e0e0e"></div>
<!-- name label on share -->
<div class="t" id="nz1" style="left:17.4px;top:736px;font-size:13px;color:#fff;-webkit-text-stroke:0.2px #fff;transform:scaleX(0.918);transform-origin:0 0">Nazim Hüseynov</div>
<svg class="a" style="left:113px;top:735px" width="14" height="15" viewBox="0 0 14 15" fill="none" stroke="#fff" stroke-width="1.1">
 <rect x="5" y="1" width="4" height="7.5" rx="2" fill="#fff"/><path d="M3 7 a4 4 0 0 0 8 0 M7 11 V13.5"/><path d="M1.5 1 L12.5 14" stroke="#000" stroke-width="2.4"/><path d="M1.5 1 L12.5 14"/>
</svg>
<!-- small avatars -->
<div class="a" style="left:24px;top:791px;width:42px;height:42px;border-radius:50%;background:#6264a7"></div>
<div class="t" style="left:24px;top:804.5px;width:42px;text-align:center;font-size:14.5px;font-weight:bold;color:#fff">+48</div>
<div class="a" style="left:107px;top:790px;width:44px;height:44px;border-radius:50%;background:#e6dad6"></div>
<div class="t" style="left:107px;top:798px;width:44px;text-align:center;font-size:25px;color:#5b3a2c;-webkit-text-stroke:0.3px #5b3a2c">ə</div>
<div class="a" style="left:191px;top:790px;width:44px;height:44px;border-radius:50%;background:#d9eef0"></div>
<div class="t" style="left:191px;top:803px;width:44px;text-align:center;font-size:16.5px;color:#3b7373;-webkit-text-stroke:0.35px #3b7373">T</div>
<div class="a" style="left:275px;top:790px;width:44px;height:44px;border-radius:50%;background:#cfdbe8"></div>
<div class="t" style="left:275px;top:804px;width:44px;text-align:center;font-size:17.5px;color:#173c66;-webkit-text-stroke:0.4px #173c66">OK</div>
<!-- tiles -->
<div class="a" style="left:339px;top:765px;width:180px;height:94px;background:#3f3f3f"></div>
<div class="a" style="left:519px;top:765px;width:180px;height:94px;background:#404040"></div>
<div class="a" style="left:699px;top:765px;width:180px;height:94px;background:#3a3a3a"></div>
<div class="a" style="left:879px;top:765px;width:180px;height:94px;background:radial-gradient(ellipse 90px 70px at 50% 40%,#4a4b72 0,#3a3b5a 55%,#2e2f44 100%)"></div>
<div class="a" style="left:1059px;top:765px;width:180px;height:94px;background:#3b3b3b"></div>
<!-- Tünzalə avatar -->
<svg class="a" style="left:407px;top:789px" width="44" height="44" viewBox="0 0 44 44">
 <defs><clipPath id="av1"><circle cx="22" cy="22" r="21.7"/></clipPath>
 <pattern id="dots" width="2" height="2" patternUnits="userSpaceOnUse"><rect width="2" height="2" fill="#1e1e1e"/><circle cx="1" cy="1" r="0.45" fill="#bbb"/></pattern></defs>
 <g clip-path="url(#av1)">
  <rect width="44" height="44" fill="#3c2a28"/>
  <rect x="0" y="0" width="44" height="6" fill="#5a4a48"/>
  <path d="M12 8 Q22 2 34 8 L38 30 H8z" fill="#25282c"/>
  <path d="M15 14 Q16 4 24 4 Q31 5 31 14 L32 30 H14z" fill="#4a3028"/>
  <ellipse cx="23.5" cy="14" rx="5" ry="6.5" fill="#cfaaa0"/>
  <path d="M19.5 12.5 h3 M24.5 12.5 h3" stroke="#333" stroke-width="1"/>
  <path d="M8 44 Q9 26 16 23 Q22 27 30 23 Q38 26 40 44z" fill="url(#dots)"/>
  <path d="M19 22 Q22 25 28 22 L30 32 Q22 30 16 32z" fill="#4a3028" opacity="0.9"/>
  <ellipse cx="23" cy="40" rx="14" ry="4" fill="#f0f0f0"/>
  <ellipse cx="15" cy="37" rx="4" ry="2.5" fill="#d8b8b0"/><ellipse cx="27" cy="37" rx="4" ry="2.5" fill="#d8b8b0"/>
 </g>
</svg>
<!-- Çingiz avatar -->
<svg class="a" style="left:587px;top:789px" width="44" height="44" viewBox="0 0 44 44">
 <defs><clipPath id="av2"><circle cx="22" cy="22" r="21.7"/></clipPath></defs>
 <g clip-path="url(#av2)">
  <rect width="44" height="44" fill="#1a1a1a"/>
  <path d="M26 0 H44 V26 L30 24z" fill="#d9ccb2"/>
  <path d="M2 14 L10 12 L10 26 L4 28z" fill="#d8ccb4"/>
  <rect x="12" y="6" width="6" height="20" fill="#222"/>
  <path d="M15 12 Q15 3 23 3 Q30 3 30 12 L29 22 Q23 28 16 22z" fill="#c5a090"/>
  <path d="M15 10 Q16 3 23 3 Q30 3 30 10 Q27 6 23 6 Q18 6 15 10z" fill="#c9c6c0"/>
  <path d="M17.5 17.5 Q21 16 26 17.5 L25 19 Q21 18 18.5 19z" fill="#3a2a22"/>
  <path d="M4 44 Q6 30 16 25 L22 27 L30 24 Q40 28 42 44z" fill="#222"/>
  <path d="M15 26 L22 27 L28 24 L20 44 H12z" fill="#d8e0ea"/>
  <path d="M18 28 L22 30 L16 44 H13z" fill="#5a78b0"/>
  <rect x="19" y="35" width="12" height="3" fill="#2aa0d8"/><rect x="19" y="38" width="12" height="3" fill="#d8283a"/><rect x="19" y="41" width="12" height="3" fill="#2a9a3a"/>
 </g>
</svg>
<div class="t" style="left:353.8px;top:841px;font-size:13.5px;color:#fff;-webkit-text-stroke:0.25px #fff;transform:scaleX(0.848);transform-origin:0 0">Tünzalə Yusifova Şam...</div>
<div class="t" style="left:533.1px;top:841px;font-size:13.5px;color:#fff;-webkit-text-stroke:0.25px #fff;transform:scaleX(0.876);transform-origin:0 0">Çingiz Dadaşov</div>
<svg class="a" style="left:645px;top:844px" width="16" height="6" viewBox="0 0 16 6" fill="#e8e8e8"><circle cx="2.5" cy="3" r="1.3"/><circle cx="8" cy="3" r="1.3"/><circle cx="13.5" cy="3" r="1.3"/></svg>
<div class="a" style="left:767px;top:790px;width:44px;height:44px;border-radius:50%;background:#f2d4dd"></div>
<div class="t" style="left:767px;top:804px;width:44px;text-align:center;font-size:16px;color:#8c2a52;-webkit-text-stroke:0.4px #8c2a52">F</div>
<div class="t" style="left:713.9px;top:841px;font-size:13.5px;color:#fff;-webkit-text-stroke:0.25px #fff;transform:scaleX(0.872);transform-origin:0 0">Firidə Mustafayeva</div>
<!-- Adalat -->
<div class="a" style="left:938px;top:781px;width:62px;height:62px;border-radius:50%;border:3.5px solid #979af2"></div>
<div class="a" style="left:947px;top:790px;width:44px;height:44px;border-radius:50%;background:#e8dbd5"></div>
<div class="t" style="left:947px;top:804px;width:44px;text-align:center;font-size:16.5px;color:#5a3a2a;-webkit-text-stroke:0.3px #5a3a2a">AA</div>
<div class="t" style="left:893.1px;top:841px;font-size:13.5px;color:#fff;-webkit-text-stroke:0.25px #fff;transform:scaleX(0.918);transform-origin:0 0">Adalat Atayi</div>
<!-- Nazim -->
<svg class="a" style="left:1127px;top:789px" width="44" height="44" viewBox="0 0 44 44">
 <defs><clipPath id="av3"><circle cx="22" cy="22" r="21.7"/></clipPath></defs>
 <g clip-path="url(#av3)">
  <rect width="44" height="44" fill="#f8f8f8"/>
  <path d="M12 14 Q12 3 23 3 Q34 3 34 14 L33 28 Q28 34 23 34 Q17 34 13 28z" fill="#b89484"/>
  <path d="M12 14 Q12 3 23 3 Q34 3 34 14 L32 12 Q30 6 23 6 Q16 6 14 12z" fill="#8a8480"/>
  <path d="M17 15 h4 M25 15 h4" stroke="#5a4038" stroke-width="1.6"/>
  <path d="M18 24 Q23 21 28 24 L27 26 Q23 24 19 26z" fill="#6a6058"/>
  <path d="M2 44 Q4 36 16 33 L23 38 L30 33 Q41 36 42 44z" fill="#1a2040"/>
  <path d="M16 33 L23 38 L30 33 L28 44 H18z" fill="#f0f2f6"/>
  <path d="M21 38 h4 l1 6 h-6z" fill="#1e2e60"/>
 </g>
</svg>
<div class="t" id="nz2" style="left:1073.7px;top:841px;font-size:13.5px;color:#fff;-webkit-text-stroke:0.25px #fff;transform:scaleX(0.884);transform-origin:0 0">Nazim Hüseynov</div>
<svg class="a" style="left:491px;top:840px" width="14" height="15" viewBox="0 0 14 15" fill="none" stroke="#fff" stroke-width="1.1"><rect x="5" y="1" width="4" height="7.5" rx="2" fill="#fff"/><path d="M3 7 a4 4 0 0 0 8 0 M7 11 V13.5"/><path d="M1.5 1 L12.5 14" stroke="#3c3c3c" stroke-width="2.4"/><path d="M1.5 1 L12.5 14"/></svg>
<svg class="a" style="left:624px;top:840px" width="14" height="15" viewBox="0 0 14 15" fill="none" stroke="#fff" stroke-width="1.1"><rect x="5" y="1" width="4" height="7.5" rx="2" fill="#fff"/><path d="M3 7 a4 4 0 0 0 8 0 M7 11 V13.5"/><path d="M1.5 1 L12.5 14" stroke="#3c3c3c" stroke-width="2.4"/><path d="M1.5 1 L12.5 14"/></svg>
<svg class="a" style="left:822px;top:840px" width="14" height="15" viewBox="0 0 14 15" fill="none" stroke="#fff" stroke-width="1.1"><rect x="5" y="1" width="4" height="7.5" rx="2" fill="#fff"/><path d="M3 7 a4 4 0 0 0 8 0 M7 11 V13.5"/><path d="M1.5 1 L12.5 14" stroke="#3c3c3c" stroke-width="2.4"/><path d="M1.5 1 L12.5 14"/></svg>
<svg class="a" style="left:1173px;top:840px" width="14" height="15" viewBox="0 0 14 15" fill="none" stroke="#fff" stroke-width="1.1"><rect x="5" y="1" width="4" height="7.5" rx="2" fill="#fff"/><path d="M3 7 a4 4 0 0 0 8 0 M7 11 V13.5"/><path d="M1.5 1 L12.5 14" stroke="#3c3c3c" stroke-width="2.4"/><path d="M1.5 1 L12.5 14"/></svg>
<svg class="a" style="left:1239px;top:765px;filter:blur(0.4px)" width="180" height="94" viewBox="0 0 180 94">
<rect width="180" height="94" fill="#000"/>
<rect x="6" y="0" width="42" height="31" fill="#e6e2dc"/><rect x="16" y="13" width="22" height="14" fill="#2a2220"/><rect x="18" y="15" width="18" height="10" fill="#6a5040"/><path d="M14.0 31 Q14.0 21 27 21 Q40.0 21 40.0 31z" fill="#9ab4e0"/><ellipse cx="27" cy="15" rx="4.5" ry="5.5" fill="#c09888"/><path d="M22.5 13.35 Q22.5 8.0 27 8.0 Q31.5 8.0 31.5 13.35 Q27 11.15 22.5 13.35z" fill="#888"/><path d="M22.5 15 h3.5 M28 15 h3.5" stroke="#222" stroke-width="1.1"/><path d="M26.5 21 h1.5 l1 9 h-3z" fill="#223"/><rect x="48" y="0" width="41" height="31" fill="#3a3426"/><rect x="70" y="0" width="19" height="14" fill="#6a8aa8"/><rect x="50" y="3" width="16" height="26" fill="#6a5a3a"/><path d="M52 6 v20 M56 6 v20 M60 6 v20 M64 6 v20" stroke="#2a2418" stroke-width="1.2"/><rect x="51" y="12" width="5" height="6" fill="#3a7ab8"/><path d="M57.0 31 Q57.0 24 69 24 Q81.0 24 81.0 31z" fill="#3a3a3a"/><ellipse cx="69" cy="19" rx="7" ry="9" fill="#c8a496"/><path d="M62 16.3 Q62 8.5 69 8.5 Q76 8.5 76 16.3 Q69 12.7 62 16.3z" fill="#d8d8d8"/><path d="M64.5 18 h3.5 M70 18 h3.5" stroke="#222" stroke-width="1.1"/><rect x="89" y="0" width="42" height="31" fill="#dcd6da"/><path d="M97.0 31 Q97.0 22 110 22 Q123.0 22 123.0 31z" fill="#2a2222"/><path d="M103 31.5 Q102 7.5 110 8.5 Q118 7.5 117 31.5z" fill="#5a3a2e"/><ellipse cx="110" cy="17" rx="5" ry="6.5" fill="#c8a090"/><path d="M105 15.7 Q105 8.5 110 8.5 Q115 8.5 115 15.7 Q110 11.8 105 15.7z" fill="#5a3a2e"/><path d="M105.5 16 h3.5 M111 16 h3.5" stroke="#222" stroke-width="1.1"/><rect x="143" y="0" width="18" height="31" fill="#d8cfc6"/><path d="M144.0 31 Q144.0 23 152 23 Q160.0 23 160.0 31z" fill="#e8e4e0"/><path d="M146 29.5 Q145 7.5 152 8.5 Q159 7.5 158 29.5z" fill="#9a7858"/><ellipse cx="152" cy="16" rx="4" ry="5.5" fill="#d8b8a8"/><path d="M148 14.9 Q148 8.5 152 8.5 Q156 8.5 156 14.9 Q152 11.6 148 14.9z" fill="#9a7858"/><rect x="6" y="31" width="42" height="32" fill="#c0b098"/><path d="M6 40 h42 M6 50 h42" stroke="#7a5a3a" stroke-width="1.5"/><rect x="8" y="33" width="10" height="6" fill="#c84a3a" opacity="0.6"/><rect x="34" y="42" width="10" height="7" fill="#4a6a9a" opacity="0.6"/><path d="M9.0 63 Q9.0 53 29 53 Q49.0 53 49.0 63z" fill="#2a2424"/><ellipse cx="28" cy="45" rx="7" ry="9" fill="#c09a8a"/><path d="M21 42.3 Q21 34.5 28 34.5 Q35 34.5 35 42.3 Q28 38.7 21 42.3z" fill="#bbb"/><path d="M23.5 44 h3.5 M29 44 h3.5" stroke="#222" stroke-width="1.1"/><rect x="6" y="58" width="12" height="4" fill="#7a6ae8"/><rect x="48" y="31" width="41" height="32" fill="#b8b8b0"/><rect x="48" y="54" width="41" height="9" fill="#8a8a84"/><path d="M59.0 63 Q59.0 52 69 52 Q79.0 52 79.0 63z" fill="#c8d0dc"/><ellipse cx="69" cy="47" rx="3.5" ry="4.5" fill="#b89080"/><path d="M65.5 45.65 Q65.5 41.0 69 41.0 Q72.5 41.0 72.5 45.65 Q69 43.85 65.5 45.65z" fill="#333"/><rect x="101" y="31" width="18" height="32" fill="#c8c8c8"/><path d="M102.0 63 Q102.0 55 110 55 Q118.0 55 118.0 63z" fill="#1e2030"/><ellipse cx="110" cy="48" rx="3.5" ry="4.5" fill="#c8a898"/><path d="M106.5 46.65 Q106.5 42.0 110 42.0 Q113.5 42.0 113.5 46.65 Q110 44.85 106.5 46.65z" fill="#ddd"/><path d="M105.5 48 h3.5 M111 48 h3.5" stroke="#222" stroke-width="1.1"/><rect x="131" y="31" width="42" height="32" fill="#d8d4cc"/><rect x="131" y="31" width="16" height="32" fill="#b89468"/><rect x="157" y="31" width="16" height="14" fill="#e8eef2"/><path d="M137.0 63 Q137.0 54 152 54 Q167.0 54 167.0 63z" fill="#eeeeee"/><ellipse cx="152" cy="45" rx="5" ry="6" fill="#c8a090"/><path d="M147 43.2 Q147 37.5 152 37.5 Q157 37.5 157 43.2 Q152 40.8 147 43.2z" fill="#3a2a22"/><path d="M147.5 45 h3.5 M153 45 h3.5" stroke="#222" stroke-width="1.1"/><rect x="6" y="63" width="42" height="31" fill="#d8d8d6"/><rect x="6" y="74" width="8" height="20" fill="#4a7a3a"/><rect x="33" y="71" width="10" height="5" fill="#f0f0f0"/><path d="M10.0 94 Q10.0 84 25 84 Q40.0 84 40.0 94z" fill="#b8c4d0"/><ellipse cx="25" cy="76" rx="6" ry="8" fill="#8a6a58"/><path d="M19 73.6 Q19 66.5 25 66.5 Q31 66.5 31 73.6 Q25 70.4 19 73.6z" fill="#222"/><path d="M20.5 75 h3.5 M26 75 h3.5" stroke="#222" stroke-width="1.1"/><rect x="60" y="63" width="17" height="31" fill="#e07a58"/><rect x="60" y="63" width="17" height="6" fill="#e89880"/><path d="M60.0 94 Q60.0 82 68 82 Q76.0 82 76.0 94z" fill="#d07050"/><ellipse cx="68" cy="76" rx="4" ry="5" fill="#d88a6a"/><path d="M64 74.5 Q64 69.5 68 69.5 Q72 69.5 72 74.5 Q68 72.5 64 74.5z" fill="#c87050"/><rect x="89" y="63" width="42" height="31" fill="#e0dcd6"/><rect x="96" y="72" width="10" height="14" fill="#2a2420"/><path d="M102.0 94 Q102.0 86 115 86 Q128.0 86 128.0 94z" fill="#d8dce4"/><path d="M108 92.5 Q107 68.5 115 69.5 Q123 68.5 122 92.5z" fill="#1a1414"/><ellipse cx="115" cy="78" rx="5" ry="6.5" fill="#d0aca0"/><path d="M110 76.7 Q110 69.5 115 69.5 Q120 69.5 120 76.7 Q115 72.8 110 76.7z" fill="#1a1414"/><rect x="143" y="63" width="18" height="31" fill="#dcd4cc"/><path d="M143.0 94 Q143.0 86 152 86 Q161.0 86 161.0 94z" fill="#f0f0f0"/><path d="M145.5 91 Q144.5 68 152 69 Q159.5 68 158.5 91z" fill="#6a4034"/><ellipse cx="152" cy="77" rx="4.5" ry="6" fill="#d0a090"/><path d="M147.5 75.8 Q147.5 69 152 69 Q156.5 69 156.5 75.8 Q152 72.2 147.5 75.8z" fill="#6a4034"/><rect x="8" y="27" width="22" height="2" fill="#fff" opacity="0.55"/><rect x="50" y="27" width="20" height="2" fill="#fff" opacity="0.55"/><rect x="91" y="27" width="26" height="2" fill="#fff" opacity="0.55"/><rect x="145" y="27" width="20" height="2" fill="#fff" opacity="0.55"/><rect x="8" y="59" width="12" height="2" fill="#fff" opacity="0.55"/><rect x="50" y="59" width="18" height="2" fill="#fff" opacity="0.55"/><rect x="91" y="59" width="20" height="2" fill="#fff" opacity="0.55"/><rect x="133" y="59" width="16" height="2" fill="#fff" opacity="0.55"/><rect x="8" y="91" width="18" height="2" fill="#fff" opacity="0.55"/><rect x="50" y="91" width="18" height="2" fill="#fff" opacity="0.55"/><rect x="91" y="91" width="18" height="2" fill="#fff" opacity="0.55"/><rect x="145" y="91" width="18" height="2" fill="#fff" opacity="0.55"/>
</svg>
<svg class="a" style="left:1419px;top:765px;filter:blur(0.6px)" width="180" height="94" viewBox="0 0 179 94" preserveAspectRatio="none">
 <defs>
  <linearGradient id="wall" x1="0" x2="1"><stop offset="0" stop-color="#d2cac2"/><stop offset="0.35" stop-color="#e6e0da"/><stop offset="0.7" stop-color="#e2dcd6"/><stop offset="1" stop-color="#ebe6e1"/></linearGradient>
  <radialGradient id="face" cx="0.45" cy="0.4" r="0.6"><stop offset="0" stop-color="#d2b8ae"/><stop offset="1" stop-color="#b0958c"/></radialGradient>
 </defs>
 <rect width="179" height="94" fill="url(#wall)"/>
 <defs><linearGradient id="ceil" x1="0" y1="0" x2="0" y2="1"><stop offset="0" stop-color="#b9ada2"/><stop offset="1" stop-color="#ddd5cd"/></linearGradient></defs>
 <path d="M0 0 H179 V8 Q90 6 30 12z" fill="url(#ceil)"/>
 <path d="M28 8 L60 0" stroke="#c8c0b8" stroke-width="2"/>
 <path d="M20 28 L52 30 L50 82 L18 86z" fill="#f2f0ee"/>
 <rect x="0" y="8" width="14" height="86" fill="#d4d8dc"/>
 <rect x="5" y="24" width="9" height="40" fill="#9a8470"/>
 <path d="M0 2 L24 18 L26 22 L0 12z" fill="#cfd0d2"/>
 <path d="M2 0 L28 18 L26 94 L20 94 L22 24 L0 8z" fill="#231e1c"/>
 <path d="M10 24 L14 26 L12 94 L8 94z" fill="#2a2420"/>
 <path d="M16 26 L20 28 L18 94 L14 94z" fill="#3a3430"/>
 <path d="M0 56 L12 58" stroke="#2a2420" stroke-width="1.5"/>
 <path d="M0 68 C6 62 14 64 12 70 C8 74 2 72 0 68z" fill="#5a6a48"/>
 <path d="M4 66 C10 60 16 62 14 68" fill="#7a5a48"/>
 <path d="M8 72 L28 62" stroke="#c8c0b0" stroke-width="1.2"/>
 <path d="M18 76 C24 74 32 74 37 76 C32 80 24 80 18 76z" fill="#6a7060"/>
 <path d="M20 86 C26 84 30 86 32 90 C26 92 22 90 20 86z" fill="#5a6452"/>
 <path d="M0 74 L12 80 L14 94 H0z" fill="#3a3028"/>
 <path d="M4 80 C10 78 16 82 14 86 C10 88 6 86 4 80z" fill="#8a9a78"/>
 <rect x="97" y="38" width="29" height="56" fill="#1e1a18"/>
 <rect x="101" y="43" width="21" height="51" fill="#d6d0ca"/>
 <path d="M104 58 C108 52 116 54 118 62 C116 70 108 70 104 66z" fill="#4a5236"/>
 <rect x="105" y="66" width="12" height="10" fill="#2a2626"/>
 <path d="M30 94 C34 84 46 78 62 74 L100 74 C116 78 130 86 134 94z" fill="#dde5ec"/>
 <path d="M66 64 H88 L92 94 H62z" fill="#b8a098"/>
 <path d="M40 94 C44 84 54 80 66 78 L77 92 L88 78 C104 80 118 86 124 94z" fill="#dde5ec"/>
 <path d="M50 94 C46 70 48 40 56 26 C62 16 72 14 78 14 C90 14 98 22 102 34 C106 52 104 76 100 94 L90 94 C92 76 92 60 90 44 L64 44 C62 60 62 76 64 94z" fill="#2a1c1e"/>
 <path d="M58 44 C58 32 64 26 76 26 C88 26 92 32 92 44 C92 58 86 70 76 72 C66 70 58 58 58 44z" fill="url(#face)"/>
 <path d="M57 40 C58 26 68 20 78 20 C90 20 96 28 95 42 C90 32 82 28 74 30 C66 32 60 36 57 40z" fill="#2a1c1e"/>
 <path d="M64 44 h7 M80 44 h7" stroke="#5a4440" stroke-width="1.5"/>
 <path d="M71 62 q5 2 10 0" stroke="#a0706a" stroke-width="2" fill="none"/>
 <rect x="144" y="73" width="16" height="13" rx="2" fill="#f4f2ee"/>
</svg>
<!-- ===== taskbar ===== -->
<div class="a" style="left:0;top:860px;width:1600px;height:40px;background:linear-gradient(90deg,#30291f 0,#2c2823 12%,#282723 30%,#272825 50%,#262826 58%,#2d2624 65%,#352b22 72%,#342c24 76%,#2a2a26 80%,#282724 100%)"></div>
<svg class="a" style="left:13px;top:869px" width="22" height="22" viewBox="0 0 22 22" fill="#fff">
 <path d="M0.5 3.2 L9.5 2 V10.3 H0.5z M10.5 1.8 L21 0.3 V10.3 H10.5z M0.5 11.3 H9.5 V19.7 L0.5 18.5z M10.5 11.3 H21 V21.5 L10.5 20z"/>
</svg>
<svg class="a" style="left:62px;top:870px" width="20" height="20" viewBox="0 0 20 20" fill="none" stroke="#fff" stroke-width="1.3">
 <circle cx="11.5" cy="7.5" r="6"/><path d="M7.3 11.8 L1.5 17.8"/>
</svg>
<svg class="a" style="left:112px;top:871px" width="22" height="19" viewBox="0 0 22 19">
 <path d="M0 2 Q0 0.5 1.5 0.5 H7 L8.5 2 H20.5 Q22 2 22 3.5 V17 Q22 18.5 20.5 18.5 H1.5 Q0 18.5 0 17z" fill="#f8d775"/>
 <path d="M0 2 Q0 0.5 1.5 0.5 H7 L8.5 2 V3.5 H0z" fill="#e8b84a"/>
 <path d="M3.5 18.5 V12 Q3.5 10 5.5 10 H16.5 Q18.5 10 18.5 12 V18.5 H15 V14 H7 V18.5z" fill="#3aa7e8"/>
</svg>
<svg class="a" style="left:161px;top:869px" width="22" height="22" viewBox="0 0 22 22">
 <path d="M1.5 10 C2 3.5 7 0.5 12 0.5 C18 0.5 21.5 4.5 21.5 11 V12.5 H7 C7 17 10.5 19 14 19 C16.5 19 19 18 21 16.5 V20.5 C19 21.5 16.5 22 13.5 22 C6 22 2.5 17 3.5 11.5 C4 9 5.5 7 7 6.5 C6 8 5.8 9 5.8 9.5 H15.5 C15.5 6.5 13.5 4 10.5 4 C6.5 4 3 6.5 1.5 10z" fill="#1e88e5"/>
</svg>
<svg class="a" style="left:209px;top:868px" width="25" height="23" viewBox="0 0 25 23">
 <path d="M2 5 L22 1.5 L23 5 L3 8.5z" fill="#fff" stroke="#333" stroke-width="0.6"/>
 <path d="M6 4.3 L8 7.5 M11 3.5 L13 6.7 M16 2.6 L18 5.8" stroke="#222" stroke-width="1.4"/>
 <rect x="3" y="8.5" width="20" height="13.5" fill="#fff" stroke="#555" stroke-width="0.6"/>
 <text x="4" y="20" font-family="Liberation Sans" font-weight="bold" font-size="10.5" fill="#e0442a">3</text>
 <text x="10.3" y="20" font-family="Liberation Sans" font-weight="bold" font-size="10.5" fill="#2a6ad8">2</text>
 <text x="16.5" y="20" font-family="Liberation Sans" font-weight="bold" font-size="10.5" fill="#2aa838">1</text>
</svg>
<!-- task buttons -->
<div class="a" style="left:247px;top:861px;width:158px;height:38px;border:1px solid #6a5c60;background:linear-gradient(90deg,#46383c,#54464b 60%,#4a3e40)"></div>
<div class="a" style="left:408px;top:861px;width:158px;height:38px;border:1px solid #625a58;background:linear-gradient(90deg,#4c4446,#4a4644 50%,#474644)"></div>
<div class="a" style="left:568px;top:861px;width:158px;height:38px;border:1px solid #a8a8a8;background:linear-gradient(#6e6e6e,#6a6a6a 50%,#636363)"></div>
<div class="a" style="left:729px;top:861px;width:158px;height:38px;border:1px solid #626262;background:#474644"></div>
<!-- word icon -->
<svg class="a" style="left:256px;top:869px" width="24" height="22" viewBox="0 0 24 22">
 <rect x="9" y="3" width="14" height="16" fill="#fff" stroke="#9bb" stroke-width="0.5"/>
 <path d="M12 6.5 H21 M12 9 H21 M12 11.5 H21 M12 14 H21 M12 16.5 H21" stroke="#2b579a" stroke-width="1.2"/>
 <path d="M0.5 2.5 L13 0.5 V21.5 L0.5 19.5z" fill="#2b579a"/>
 <text x="2" y="15" font-family="Liberation Sans" font-weight="bold" font-size="9" fill="#fff">W</text>
</svg>
<div class="t" style="left:283.8px;top:874px;font-size:12.5px;color:#fff;transform:scaleX(0.923);transform-origin:0 0">ADPU NİZAMİ GƏ...</div>
<!-- teams icon with badge -->
<svg class="a" style="left:416px;top:867px;overflow:visible" width="28" height="27" viewBox="0 0 28 27">
 <circle cx="14" cy="4.5" r="3.8" fill="#7b83eb"/><circle cx="21.5" cy="6.5" r="2.8" fill="#5059c9"/>
 <path d="M17.5 10 H25 V17 a4 4 0 0 1 -7.5 2z" fill="#5059c9"/>
 <path d="M8 10 H19 V19 a5.5 5.5 0 0 1 -11 0z" fill="#7b83eb"/>
 <rect x="1" y="7" width="12" height="12" rx="1" fill="#4b53bc"/>
 <path d="M4 10 H10 M7 10 V16.5" stroke="#fff" stroke-width="1.8"/>
 <circle cx="19.5" cy="20.5" r="6.5" fill="#d82a3a" stroke="#4a4644" stroke-width="0.8"/>
 <text x="19.5" y="24.6" font-family="Liberation Sans" font-weight="bold" font-size="11" fill="#fff" text-anchor="middle">9</text>
</svg>
<div class="t" style="left:444.8px;top:874px;font-size:12.5px;color:#fff;transform:scaleX(0.981);transform-origin:0 0">Microsoft Teams</div>
<svg class="a" style="left:576px;top:868px" width="26" height="24" viewBox="0 0 26 24">
 <circle cx="14" cy="4.5" r="3.8" fill="#7b83eb"/><circle cx="21.5" cy="6.5" r="2.8" fill="#5059c9"/>
 <path d="M17.5 10 H25 V17 a4 4 0 0 1 -7.5 2z" fill="#5059c9"/>
 <path d="M8 10 H19 V19 a5.5 5.5 0 0 1 -11 0z" fill="#7b83eb"/>
 <rect x="1" y="7" width="12" height="12" rx="1" fill="#4b53bc"/>
 <path d="M4 10 H10 M7 10 V16.5" stroke="#fff" stroke-width="1.8"/>
</svg>
<div class="t" style="left:605.1px;top:874px;font-size:12.5px;color:#fff;transform:scaleX(0.951);transform-origin:0 0">“Nizami Gəncəvini...</div>
<!-- chrome -->
<svg class="a" style="left:738px;top:869px" width="22" height="22" viewBox="0 0 22 22">
 <path d="M11 11 L20.5 5.5 A11 11 0 0 0 1.5 5.5z" fill="#db4437"/>
 <path d="M11 11 L1.5 5.5 A11 11 0 0 0 11 22z" fill="#0f9d58"/>
 <path d="M11 11 L11 22 A11 11 0 0 0 20.5 5.5z" fill="#f4c20d"/>
 <circle cx="11" cy="11" r="5" fill="#fff"/><circle cx="11" cy="11" r="3.9" fill="#4285f4"/>
</svg>
<div class="t" style="left:766.2px;top:874px;font-size:12.5px;color:#fff;transform:scaleX(0.919);transform-origin:0 0">(239) Входящие - ...</div>
<!-- tray -->
<svg class="a" style="left:1325px;top:877px" width="12" height="8" viewBox="0 0 12 8"><path d="M1.5 6.5 L6 2 L10.5 6.5z" fill="#fff"/></svg>
<svg class="a" style="left:1349px;top:873px" width="16" height="16" viewBox="0 0 16 16" fill="none" stroke="#fff" stroke-width="1.1">
 <path d="M1.5 14 A12.5 12.5 0 0 1 14 1.5 M4 14 A10 10 0 0 1 14 4 M6.5 14 A7.5 7.5 0 0 1 14 6.5 M9 14 A5 5 0 0 1 14 9"/>
 <circle cx="12.5" cy="12.5" r="1.5" fill="#fff" stroke="none"/>
</svg>
<div class="a" style="left:1373px;top:872px;width:12px;height:18px;border-radius:6px;background:#0a84ff"></div>
<svg class="a" style="left:1373px;top:872px" width="12" height="18" viewBox="0 0 12 18" fill="none" stroke="#fff" stroke-width="1"><path d="M3 5.5 L9 11.5 L6 14.5 V3.5 L9 6.5 L3 12.5"/></svg>
<svg class="a" style="left:1393px;top:873px" width="20" height="16" viewBox="0 0 20 16" fill="none" stroke="#fff" stroke-width="1.2">
 <path d="M3 1 V4 M6 1 V4 M1.5 4 H7.5 V7 a3 3 0 0 1 -6 0z M4.5 10 V14"/>
 <rect x="7" y="5" width="11" height="8"/><rect x="8.5" y="6.5" width="5" height="5" fill="#fff" stroke="none"/><path d="M18.5 8 V10" stroke-width="1.6"/>
</svg>
<svg class="a" style="left:1418px;top:872px" width="18" height="18" viewBox="0 0 18 18" fill="none" stroke="#fff" stroke-width="1.1">
 <path d="M1.5 6 H4.5 L8.5 2 V16 L4.5 12 H1.5z"/><path d="M11 6.5 a3 3 0 0 1 0 5 M13 4.5 a6 6 0 0 1 0 9 M15 2.5 a9 9 0 0 1 0 13"/>
</svg>
<div class="t" style="left:1445.4px;top:874px;font-size:12.5px;color:#fff;transform:scaleX(0.913);transform-origin:0 0">AZE</div>
<div class="t" style="left:1494.4px;top:865px;font-size:12.5px;color:#fff;transform:scaleX(0.838);transform-origin:0 0">17:55</div>
<div class="t" style="left:1481.4px;top:883px;font-size:12.5px;color:#fff;transform:scaleX(0.850);transform-origin:0 0">19.05.2021</div>
<svg class="a" style="left:1552px;top:871px" width="20" height="20" viewBox="0 0 20 20">
 <path d="M1 1.5 H19 V15 H12 L10 18 L8 15 H1z" fill="#fff"/>
 <path d="M4 5 H16 M4 8 H16 M4 11 H12" stroke="#2a2624" stroke-width="1.2"/>
</svg>


</div>
</body></html>
